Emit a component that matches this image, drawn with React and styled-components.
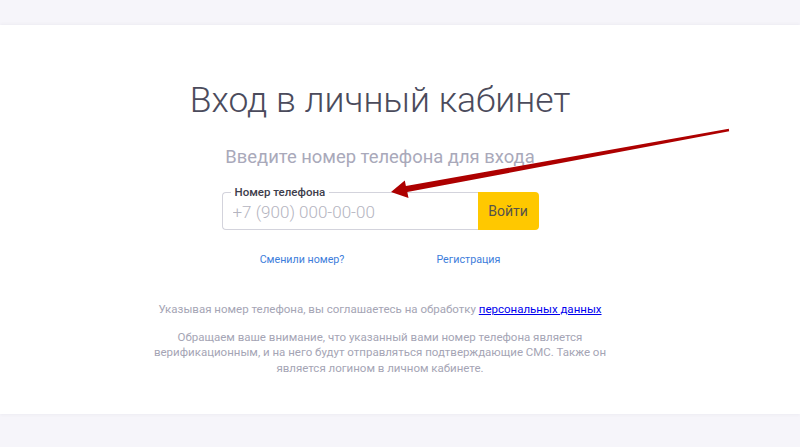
import React from "react";
import styled, { createGlobalStyle } from "styled-components";

const GlobalStyle = createGlobalStyle`
  html, body {
    margin: 0;
    padding: 0;
    background: #f6f5fa;
    font-family: Roboto, "Liberation Sans", Arial, sans-serif;
  }
`

const Page = styled.div`
  position: relative;
  width: 800px;
  height: 447px;
  overflow: hidden;
  padding-top: 25px;
  box-sizing: border-box;
`

const Panel = styled.section`
  background: #fff;
  height: 389px;
  box-shadow: 0 0 4px rgba(60, 60, 100, 0.08);
  display: flex;
  flex-direction: column;
  align-items: center;
  padding: 54px 40px 0 0;
  box-sizing: border-box;
`

const Title = styled.h1`
  margin: 0;
  font-size: 35.5px;
  line-height: 42px;
  font-weight: 300;
  color: #4b4b5c;
`

const Subtitle = styled.h2`
  margin: 26px 0 0;
  font-size: 18.4px;
  line-height: 20px;
  font-weight: 400;
  color: #a9a9ba;
`

const Form = styled.form`
  margin-top: 25px;
  display: flex;
  height: 38px;
`

const Field = styled.label`
  position: relative;
  display: block;
  width: 256px;
  border: 1px solid #d3d3dc;
  border-right: none;
  border-radius: 4px 0 0 4px;
  box-sizing: border-box;
`

const Legend = styled.span`
  position: absolute;
  top: -8px;
  left: 8px;
  padding: 0 4px;
  background: #fff;
  font-size: 11.5px;
  line-height: 14px;
  font-weight: 500;
  color: #3d3d4c;
`

const Input = styled.input`
  width: 100%;
  height: 100%;
  border: none;
  outline: none;
  background: transparent;
  padding: 2px 0 0 10px;
  box-sizing: border-box;
  font-family: inherit;
  font-size: 17px;
  font-weight: 300;
  color: #333;
  &::placeholder {
    color: #b4b4c0;
  }
`

const Submit = styled.button`
  width: 61px;
  border: none;
  border-radius: 0 4px 4px 0;
  background: #ffc800;
  font-family: inherit;
  font-size: 14px;
  color: #57534a;
  cursor: pointer;
`

const Links = styled.div`
  margin-top: 23px;
  display: flex;
  gap: 92px;
`

const SmallLink = styled.a`
  font-size: 10.7px;
  line-height: 14px;
  color: #3d7ddb;
  text-decoration: none;
`

const Note = styled.p`
  margin: ${(p) => p.$top}px 0 0;
  max-width: 470px;
  text-align: center;
  font-size: 11.5px;
  line-height: 15.5px;
  color: #a5a5b5;
`

const DataLink = styled.a`
  color: #0000ee;
  text-decoration: underline;
`

const Arrow = styled.svg`
  position: absolute;
  top: 0;
  left: 0;
  pointer-events: none;
`

export default function App() {
  return (
    <>
      <GlobalStyle />
      <Page>
        <Panel>
          <Title>Вход в личный кабинет</Title>
          <Subtitle>Введите номер телефона для входа</Subtitle>
          <Form onSubmit={(e) => e.preventDefault()}>
            <Field>
              <Legend>Номер телефона</Legend>
              <Input type="tel" placeholder="+7 (900) 000-00-00" />
            </Field>
            <Submit type="submit">Войти</Submit>
          </Form>
          <Links>
            <SmallLink href="#">Сменили номер?</SmallLink>
            <SmallLink href="#">Регистрация</SmallLink>
          </Links>
          <Note $top={35}>
            Указывая номер телефона, вы соглашаетесь на обработку{" "}
            <DataLink href="#">персональных данных</DataLink>
          </Note>
          <Note $top={12}>
            Обращаем ваше внимание, что указанный вами номер телефона является
            верификационным, и на него будут отправляться подтверждающие СМС.
            Также он является логином в личном кабинете.
          </Note>
        </Panel>
        {/* red annotation arrow drawn over the form */}
        <Arrow width="800" height="447" viewBox="0 0 800 447">
          <polygon
            fill="#ad0000"
            points="391,192 408.5,198 407.3,192 729.2,131.3 728.8,128.7 405.9,186 404.8,180.5"
          />
        </Arrow>
      </Page>
    </>
  );
}
